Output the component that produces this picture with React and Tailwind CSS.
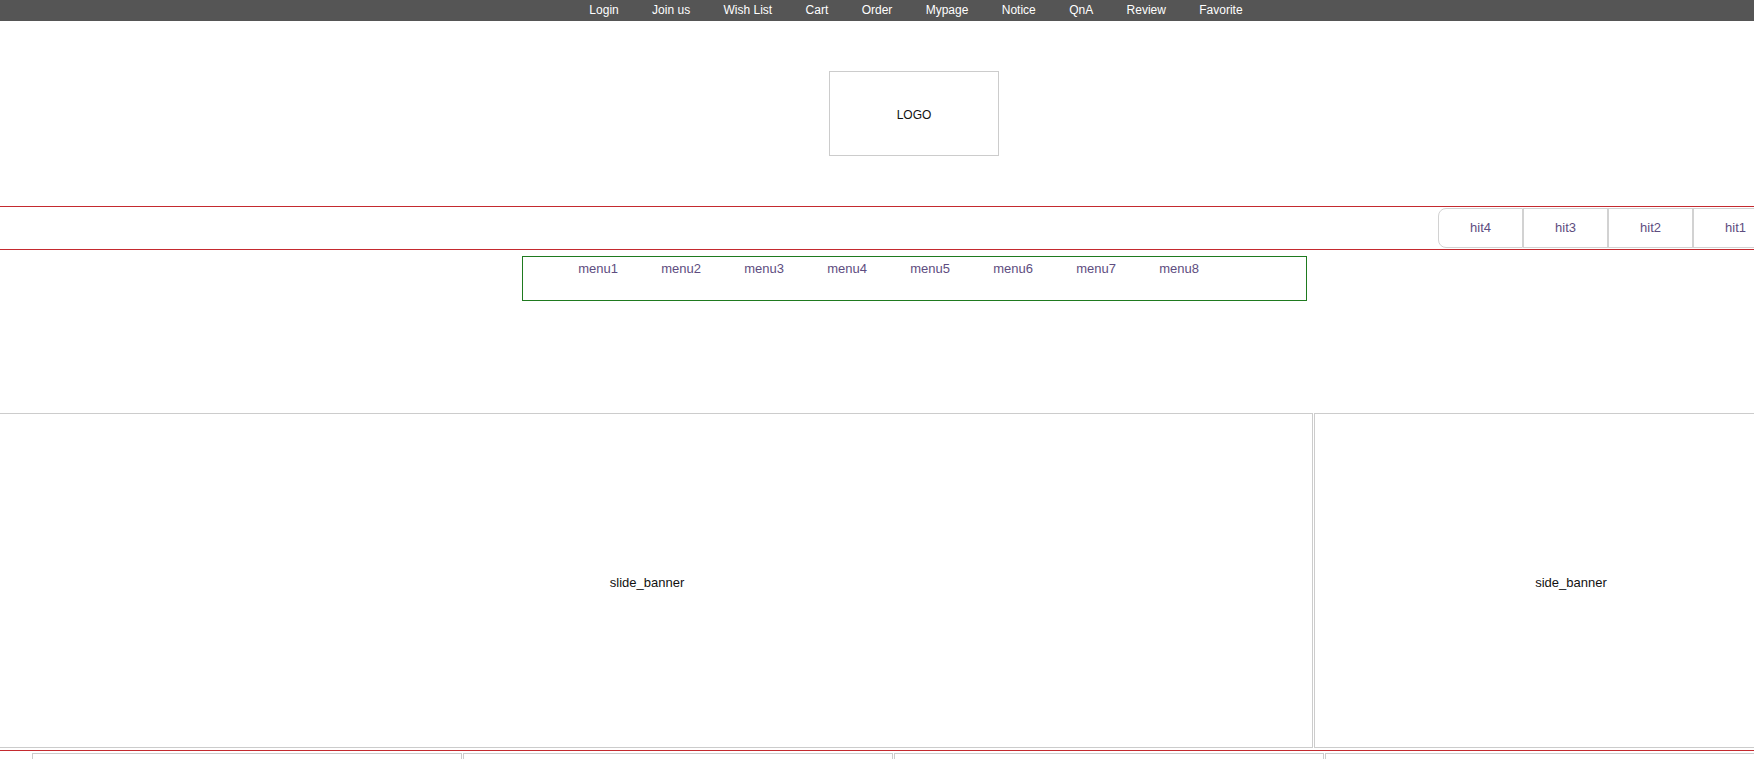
import React from "react";

const topLinks = ["Login", "Join us", "Wish List", "Cart", "Order", "Mypage", "Notice", "QnA", "Review", "Favorite"];
const menus = ["menu1", "menu2", "menu3", "menu4", "menu5", "menu6", "menu7", "menu8"];
const hits = ["hit4", "hit3", "hit2", "hit1"];

export default function App() {
  return (
    <div className="w-full h-[759px] overflow-hidden bg-white" style={{ fontFamily: '"Liberation Sans", "Noto Sans CJK KR", sans-serif' }}>
      <div className="w-[1828px]">
        {/* top bar */}
        <div className="h-[21px] bg-[#555555] flex justify-center items-center pl-[4px]">
          {topLinks.map((t) => (
            <span key={t} className="px-[16.7px] text-[12px] leading-[21px] text-white whitespace-nowrap">
              {t}
            </span>
          ))}
        </div>

        {/* logo */}
        <div className="flex justify-center pt-[50px] pb-[50px]">
          <div className="w-[170px] h-[85px] border border-[#cccccc] flex items-center justify-center pt-[2px] text-[12px] text-[#111]">
            LOGO
          </div>
        </div>

        {/* red band with hits */}
        <div className="border-y border-[#c42a2f] py-[1px] flex justify-end pr-[50px]">
          {hits.map((h, i) => (
            <div
              key={h}
              className={
                i === 0
                  ? "w-[85px] h-[40px] border border-[#d2d2d2] rounded-l-[8px] flex items-center justify-center text-[13px] text-[#5e4d80]"
                  : "w-[85px] h-[40px] border border-[#d2d2d2] flex items-center justify-center text-[13px] text-[#5e4d80]"
              }
            >
              {h}
            </div>
          ))}
        </div>

        {/* menu box */}
        <div className="flex justify-center pt-[6px]">
          <div className="w-[785px] h-[45px] border border-[#1f7a1f] flex items-start pl-[34px] pt-[3px]">
            {menus.map((m) => (
              <span key={m} className="w-[83px] text-center text-[13px] leading-[18px] text-[#5e4d80]">
                {m}
              </span>
            ))}
          </div>
        </div>

        {/* banners */}
        <div className="flex ml-[-19px] mt-[112px] gap-[1px]">
          <div className="w-[1332px] h-[335px] border border-[#cccccc] flex items-center justify-center pt-[4px] text-[13px] text-[#111]">
            slide_banner
          </div>
          <div className="w-[514px] h-[335px] border border-[#cccccc] flex items-center justify-center pt-[4px] text-[13px] text-[#111]">
            side_banner
          </div>
        </div>

        {/* bottom section */}
        <div className="mt-[2px] border-t border-[#c42a2f] pt-[2px] flex pl-[32px] gap-[1px]">
          {[0, 1, 2, 3].map((i) => (
            <div key={i} className="w-[430px] h-[200px] border border-[#cccccc]" />
          ))}
        </div>
      </div>
    </div>
  );
}
